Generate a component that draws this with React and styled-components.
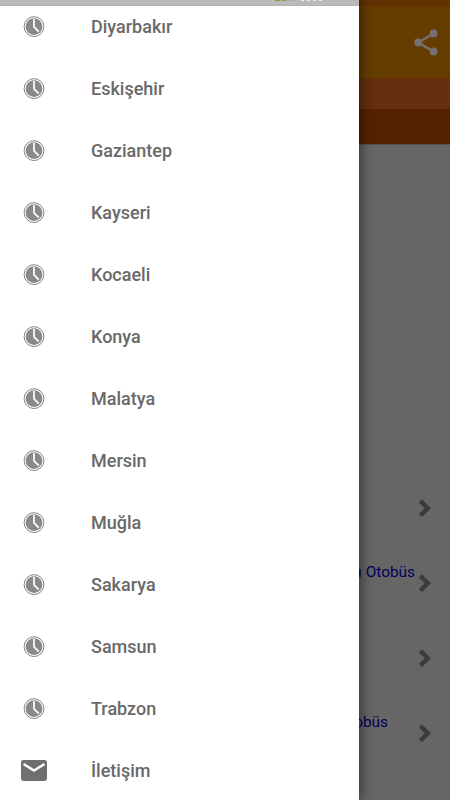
import React from "react";
import styled, {createGlobalStyle} from "styled-components";

const cities = [
  "Diyarbakır",
  "Eskişehir",
  "Gaziantep",
  "Kayseri",
  "Kocaeli",
  "Konya",
  "Malatya",
  "Mersin",
  "Muğla",
  "Sakarya",
  "Samsun",
  "Trabzon",
];

const lines = [
  {id: 1, label: "", inset: 0},
  {id: 2, label: "ı Otobüs", inset: 3},
  {id: 3, label: "", inset: 0},
  {id: 4, label: "Otobüs", inset: 30},
  {id: 5, label: "", inset: 0},
];

const ClockIcon = () => (
  <svg width="22" height="22" viewBox="0 0 22 22">
    <circle cx="11" cy="10.6" r="9.9" fill="#fff" stroke="#777" strokeWidth="0.9" />
    <circle cx="11" cy="10.6" r="8.4" fill="#898989" />
    <path d="M11 3V10.9L15.8 15.6" fill="none" stroke="#fff" strokeWidth="1.7" />
  </svg>
);

const MailIcon = () => (
  <svg width="26" height="21" viewBox="0 0 26 21">
    <rect width="26" height="21" rx="2.4" fill="#6f6f6f" />
    <path d="M2.5 4L13 10.5L23.5 4" fill="none" stroke="#fff" strokeWidth="2.5" />
  </svg>
);

const ShareIcon = () => (
  <svg width="24" height="27" viewBox="0 0 24 27">
    <path d="M19.5 4.5L4.2 13.5L19.5 22.5" fill="none" stroke="#757170" strokeWidth="2.3" />
    <circle cx="19.6" cy="4.5" r="3.9" fill="#757170" />
    <circle cx="4.2" cy="13.5" r="3.9" fill="#757170" />
    <circle cx="19.6" cy="22.5" r="3.9" fill="#757170" />
  </svg>
);

const ChevronIcon = () => (
  <svg width="14" height="18" viewBox="0 0 14 18">
    <path d="M2.4 1.9L9.9 9.2L2.4 16.5" fill="none" stroke="#3b3b3b" strokeWidth="4.4" />
  </svg>
);

const App = () => {
  return (
    <Screen>
      <GlobalStyle />
      <StatusStrip />
      <AppBar>
        <ShareIcon />
      </AppBar>
      <TabStrip />
      <TitleStrip />
      <LineList>
        {lines.map(({id, label, inset}) => (
          <LineRow key={id}>
            <LineLabel $inset={inset}>{label}</LineLabel>
            <ChevronIcon />
          </LineRow>
        ))}
      </LineList>
      <Drawer>
        <DrawerStatus>
          <StatusMark $color="#76a636" $width={5} />
          <StatusMark $color="#76a636" $width={5} />
          <StatusMark $color="#a2aa9b" $width={3} />
          <StatusMark $color="#a5a5a5" $width={3} $gap={7} />
          <StatusMark $color="#eee" $width={3} $gap={3} />
          <StatusMark $color="#eee" $width={3} $gap={3} />
          <StatusMark $color="#eee" $width={3} $gap={3} />
          <StatusMark $color="#eee" $width={3} />
        </DrawerStatus>
        <Menu>
          {cities.map((city) => (
            <MenuItem key={city}>
              <IconSlot>
                <ClockIcon />
              </IconSlot>
              <MenuLabel>{city}</MenuLabel>
            </MenuItem>
          ))}
          <MenuItem>
            <IconSlot $lift={2}>
              <MailIcon />
            </IconSlot>
            <MenuLabel>İletişim</MenuLabel>
          </MenuItem>
        </Menu>
      </Drawer>
    </Screen>
  );
};

const GlobalStyle = createGlobalStyle`
  * {
    box-sizing: border-box;
  }
  body {
    margin: 0;
    overflow: hidden;
  }
  svg {
    display: block;
    flex-shrink: 0;
  }
`;

const Screen = styled.div`
  position: relative;
  display: flex;
  flex-direction: column;
  width: 450px;
  height: 800px;
  overflow: hidden;
  background: #666;
  font-family: Roboto, "Liberation Sans", sans-serif;
`;

const StatusStrip = styled.div`
  flex: 0 0 6px;
  background: #633000;
`;

const AppBar = styled.header`
  display: flex;
  flex: 0 0 72px;
  align-items: center;
  justify-content: flex-end;
  padding-right: 12px;
  background: #663d00;
`;

const TabStrip = styled.div`
  flex: 0 0 31px;
  background: #662f0e;
`;

const TitleStrip = styled.div`
  flex: 0 0 36px;
  background: #552200;
  border-bottom: 1px solid #57504b;
`;

const LineList = styled.ul`
  flex: 1;
  margin: 0;
  padding: 325px 0 0;
  overflow: hidden;
  list-style: none;
`;

const LineRow = styled.li`
  display: flex;
  align-items: center;
  justify-content: flex-end;
  height: 75px;
  padding-right: 18px;
`;

const LineLabel = styled.span`
  margin: 0 ${({$inset}) => $inset}px 22px 0;
  color: #00005c;
  font-size: 15.4px;
  line-height: 20px;
  white-space: nowrap;
`;

const Drawer = styled.aside`
  position: absolute;
  top: 0;
  bottom: 0;
  left: 0;
  width: 359px;
  background: #fff;
  box-shadow: 0 0 14px rgba(0, 0, 0, 0.65);
`;

const DrawerStatus = styled.div`
  display: flex;
  height: 6px;
  padding-left: 275px;
  background: #bababa;
  border-bottom: 1px solid #b0b0b0;
`;

const StatusMark = styled.i`
  width: ${({$width}) => $width}px;
  height: 1px;
  margin-right: ${({$gap}) => $gap || 1}px;
  background: ${({$color}) => $color};
`;

const Menu = styled.nav`
  height: 794px;
  overflow: hidden;
`;

const MenuItem = styled.div`
  display: flex;
  align-items: center;
  height: 62px;
  &:first-child {
    margin-top: -10px;
  }
`;

const MenuLabel = styled.span`
  color: #696969;
  font-size: 18px;
  font-weight: 500;
  line-height: 22px;
`;

const IconSlot = styled.span`
  display: flex;
  flex: 0 0 91px;
  justify-content: center;
  padding: 0 23px ${({$lift}) => $lift || 0}px 0;
`;

export default App;
